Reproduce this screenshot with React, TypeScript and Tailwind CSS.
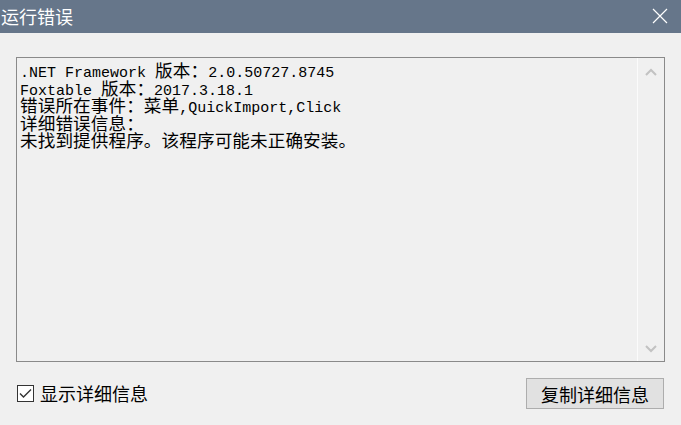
import React from "react";

const lines = [
  ".NET Framework 版本：2.0.50727.8745",
  "Foxtable 版本：2017.3.18.1",
  "错误所在事件：菜单,QuickImport,Click",
  "详细错误信息：",
  "未找到提供程序。该程序可能未正确安装。",
];

function Mixed({ text }: { text: string }) {
  const parts = text.split(/([\u3000-\u9fff\uff00-\uffef]+)/);
  return (
    <>
      {parts.map((p, i) =>
        /[\u3000-\u9fff\uff00-\uffef]/.test(p) ? (
          <span
            key={i}
            className="leading-[17.5px] text-[17.6px] [font-family:'Noto_Sans_CJK_SC',sans-serif] tracking-[0.1px]"
          >
            {p}
          </span>
        ) : (
          <span key={i} className="leading-[17.5px] whitespace-pre">
            {p}
          </span>
        )
      )}
    </>
  );
}

export default function App() {
  return (
    <div className="w-[681px] h-[425px] bg-[#f0f0f0] flex flex-col overflow-hidden [font-family:'Noto_Sans_CJK_SC',sans-serif]">
      <div className="h-[33px] bg-[#66768a] flex items-center justify-between shrink-0">
        <span className="text-white text-[18px] leading-none pl-[1px] -mt-[1px]">运行错误</span>
        <svg width="16" height="16" viewBox="0 0 16 16" className="mr-[13px] -mt-[1px]">
          <path d="M1 1 L15 15 M15 1 L1 15" stroke="#ffffff" strokeWidth="1.2" fill="none" />
        </svg>
      </div>
      <div className="flex flex-col px-[16px] pt-[24px]">
        <div className="h-[305px] border border-[#8a8a8a] flex">
          <div className="flex-1 pl-[3px] pt-[3px] text-[15px] text-black [font-family:'Liberation_Mono',monospace]">
            {lines.map((l, i) => (
              <div key={i} className="h-[17.5px] leading-[17.5px] whitespace-nowrap">
                <Mixed text={l} />
              </div>
            ))}
          </div>
          <div className="w-[27px] border-l border-[#fbfbfb] flex flex-col items-center justify-between pt-[10px] pb-[8px]">
            <svg width="12" height="8" viewBox="0 0 12 8">
              <path d="M1 7 L6 2 L11 7" stroke="#c2c2c2" strokeWidth="2" fill="none" />
            </svg>
            <svg width="12" height="8" viewBox="0 0 12 8">
              <path d="M1 1 L6 6 L11 1" stroke="#c2c2c2" strokeWidth="2" fill="none" />
            </svg>
          </div>
        </div>
        <div className="flex items-center justify-between mt-[16px] pl-[1px] pr-[1px]">
          <label className="flex items-center mt-[-1px]">
            <span className="w-[17px] h-[17px] border border-[#333333] bg-white flex items-center justify-center">
              <svg width="13" height="11" viewBox="0 0 13 11">
                <path d="M1 5.5 L4.5 9 L12 1.5" stroke="#333333" strokeWidth="1.4" fill="none" />
              </svg>
            </span>
            <span className="ml-[6px] text-[18px] text-black leading-none">显示详细信息</span>
          </label>
          <button className="w-[138px] h-[31px] bg-[#e1e1e1] border border-[#adadad] text-[18px] text-black leading-none flex items-center justify-center">
            复制详细信息
          </button>
        </div>
      </div>
    </div>
  );
}
